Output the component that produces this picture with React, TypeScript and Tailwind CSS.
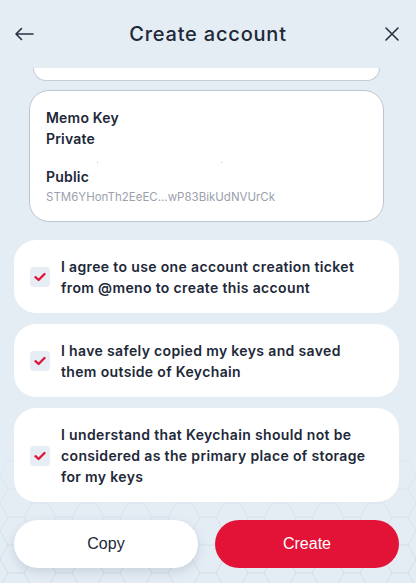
import React from "react";

const font = { fontFamily: "Inter, 'Open Sans', sans-serif" };

function CheckItem({ text }: { text: string }) {
  return (
    <div className="ml-[14px] mr-[17px] flex items-center gap-[11px] rounded-[22px] bg-white pl-4 pr-[12px] pt-[16px] pb-[15px]">
      <div className="flex h-5 w-5 shrink-0 items-center justify-center rounded-[4px] bg-[#e6edf5]">
        <svg width="12" height="10" viewBox="0 0 12 10" fill="none">
          <path d="M1.5 5.2 L4.6 8 L10.5 2" stroke="#e31337" strokeWidth="2.3" strokeLinecap="round" strokeLinejoin="round" />
        </svg>
      </div>
      <p className="max-w-[310px] text-[14px] font-semibold leading-[21px] text-[#212838] tracking-[0.35px]">{text}</p>
    </div>
  );
}

function HexBackground() {
  return (
    <svg className="absolute bottom-0 left-0 h-[150px] w-full" viewBox="0 0 416 150" preserveAspectRatio="none">
      <defs>
        <pattern id="hex" width="48" height="28" patternUnits="userSpaceOnUse">
          <path d="M0 14 L8 0 L24 0 L32 14 L24 28 L8 28 Z M32 14 L48 14" fill="none" stroke="#c9d6e0" strokeWidth="0.8" />
        </pattern>
        <linearGradient id="fade" x1="0" y1="0" x2="0" y2="1">
          <stop offset="0" stopColor="white" stopOpacity="0" />
          <stop offset="1" stopColor="white" stopOpacity="0.9" />
        </linearGradient>
        <mask id="m">
          <rect width="416" height="150" fill="url(#fade)" />
        </mask>
      </defs>
      <rect width="416" height="150" fill="url(#hex)" mask="url(#m)" />
    </svg>
  );
}

export default function App() {
  return (
    <div className="relative flex h-[583px] w-[416px] flex-col overflow-hidden bg-[#e4ecf4]" style={font}>
      <HexBackground />

      {/* Header */}
      <div className="relative flex h-[68px] items-center justify-between px-[12px]">
        <button className="flex h-6 w-6 items-center justify-center text-[#212838]">
          <svg width="20" height="14" viewBox="0 0 20 14" fill="none">
            <path d="M19 7 H2 M7.5 1.5 L2 7 L7.5 12.5" stroke="#2a3142" strokeWidth="1.6" strokeLinecap="round" strokeLinejoin="round" />
          </svg>
        </button>
        <h1 className="text-[20px] font-medium text-[#212838] tracking-[0.8px]">Create account</h1>
        <button className="flex h-6 w-6 items-center justify-center">
          <svg width="14" height="14" viewBox="0 0 14 14" fill="none">
            <path d="M1 1 L13 13 M13 1 L1 13" stroke="#2a3142" strokeWidth="1.6" strokeLinecap="round" />
          </svg>
        </button>
      </div>

      {/* Scrolled card remnant */}
      <div className="relative ml-[33px] mr-[36px] h-[13px] rounded-b-[20px] border border-t-0 border-[#c3ccd8] bg-white" />

      {/* Memo key card */}
      <div className="relative ml-[29px] mr-[32px] mt-[9px] rounded-[20px] border border-[#bcc6d3] bg-white px-4 pt-4 pb-4">
        <p className="text-[14px] font-semibold leading-[21px] text-[#212838] tracking-[0.2px]">Memo Key</p>
        <p className="text-[14px] font-semibold leading-[21px] text-[#212838] tracking-[0.2px]">Private</p>
        <div className="relative h-[17px]">
          <span className="absolute left-[51px] top-[13px] h-px w-px bg-[#b6bcc6]" />
          <span className="absolute left-[175px] top-[13px] h-px w-px bg-[#b6bcc6]" />
        </div>
        <p className="text-[14px] font-semibold leading-[21px] text-[#212838] tracking-[0.2px]">Public</p>
        <p className="mt-[2px] text-[11.5px] leading-[16px] text-[#9aa1ad]">STM6YHonTh2EeEC...wP83BikUdNVUrCk</p>
      </div>

      {/* Confirmations */}
      <div className="relative mt-[18px] flex flex-col gap-[11px]">
        <CheckItem text="I agree to use one account creation ticket from @meno to create this account" />
        <CheckItem text="I have safely copied my keys and saved them outside of Keychain" />
        <CheckItem text="I understand that Keychain should not be considered as the primary place of storage for my keys" />
      </div>

      {/* Buttons */}
      <div className="relative ml-[14px] mr-[17px] mt-[18px] flex gap-[17px]" style={{ fontFamily: "'Liberation Sans', Arial, sans-serif" }}>
        <button className="h-[48px] flex-1 rounded-full bg-white text-[16px] text-[#212838] shadow-[0_4px_10px_rgba(120,140,165,0.25)]">
          Copy
        </button>
        <button className="h-[48px] flex-1 rounded-full bg-[#e31337] text-[16px] text-white">
          Create
        </button>
      </div>
    </div>
  );
}
